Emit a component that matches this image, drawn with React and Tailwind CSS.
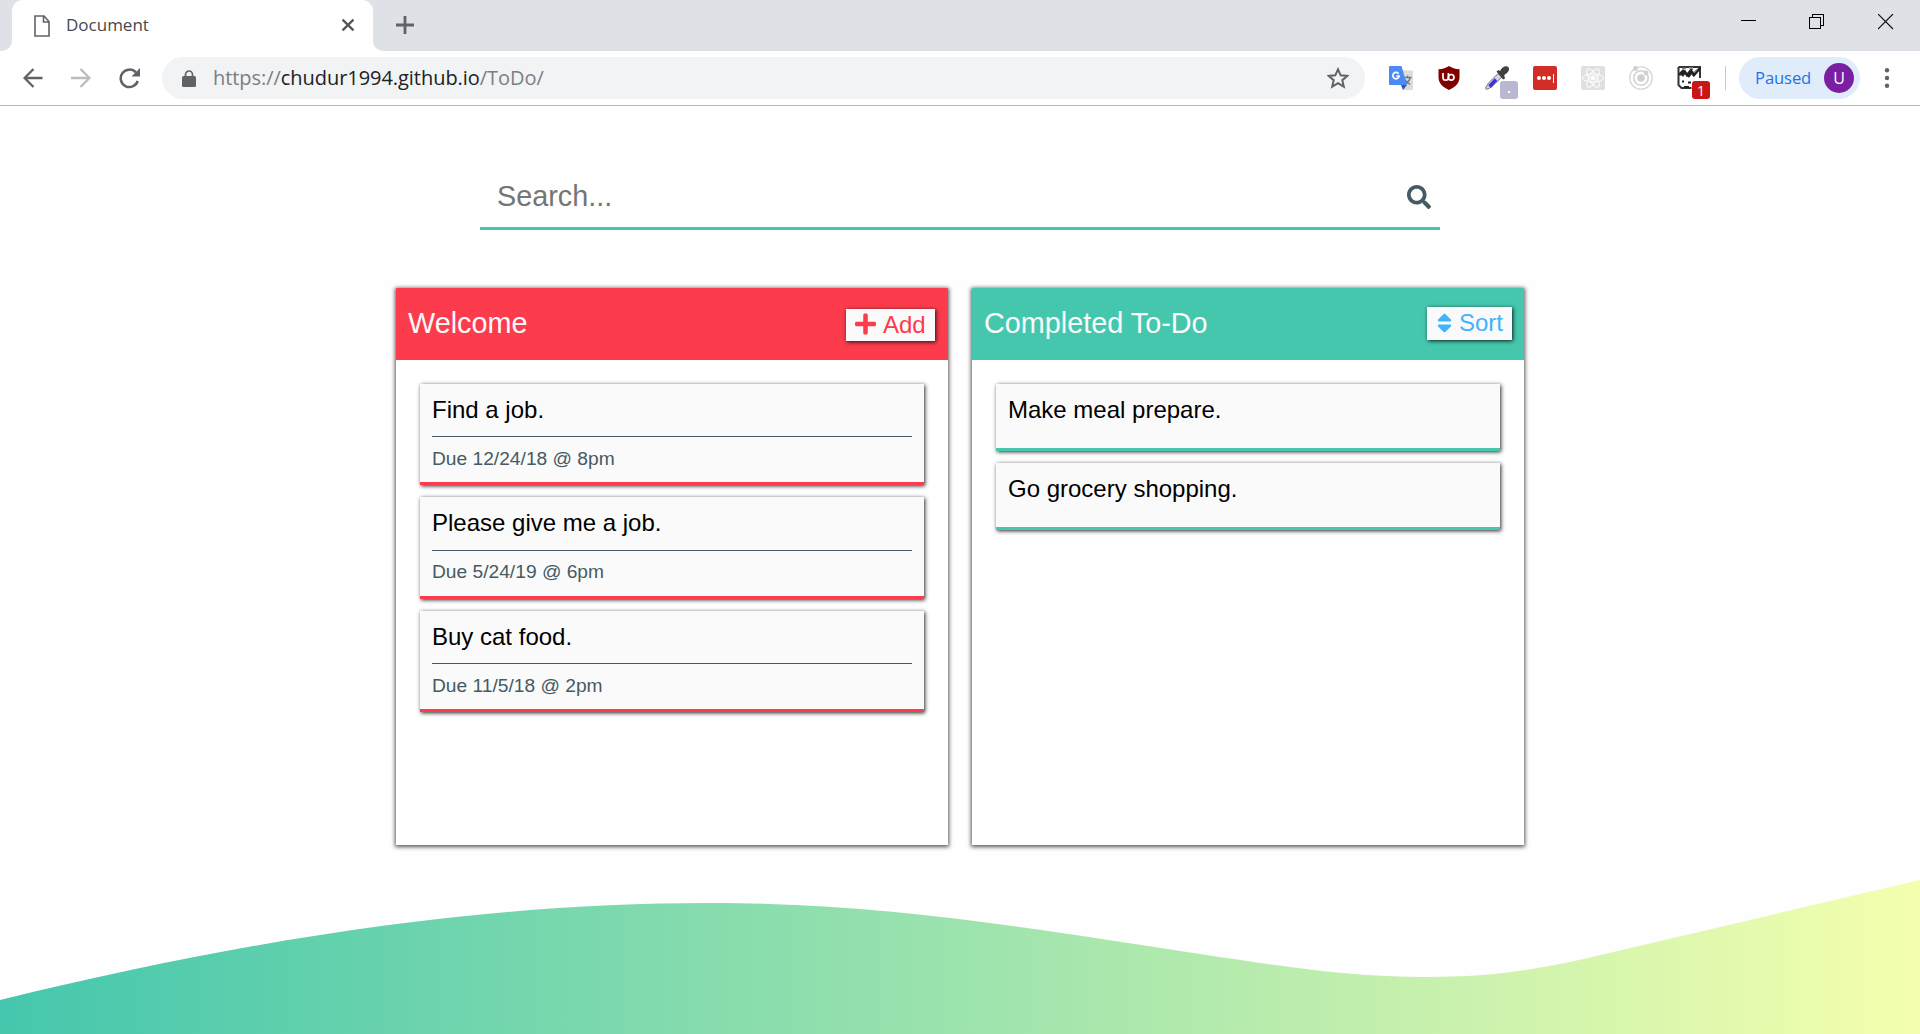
import { FaPlus, FaSearch, FaSort } from "react-icons/fa";

const SHADOW = "shadow-[0_1px_4px_1px_rgba(0,0,0,0.65)]";
const CARD_SHADOW = "shadow-[1px_1px_4px_0_rgba(0,0,0,0.85)]";

function Toolbar() {
  return (
    <header className="font-['Open_Sans',sans-serif]">
      <div className="flex h-[51px] bg-[#dee1e6]">
        <div className="h-full w-3 bg-white">
          <div className="h-full rounded-br-[10px] bg-[#dee1e6]" />
        </div>
        <div className="flex w-[361px] items-center rounded-t-[11px] bg-white pl-[22px] pr-[19px]">
          <svg className="h-[22px] w-4" viewBox="0 0 16 22" fill="none" stroke="#5f6368" strokeWidth="1.6">
            <path d="M1 1h9l5 5.500v14.500H1zM9.500 1v6H15" />
          </svg>
          <span className="ml-[16px] mt-[-1px] flex-1 text-[17px] text-[#45494d]">Document</span>
          <svg className="mt-[-2px] h-3 w-3" viewBox="0 0 12 12" stroke="#53575b" strokeWidth="2.300">
            <path d="M.5.5l11 11M11.500.5l-11 11" />
          </svg>
        </div>
        <div className="flex h-full flex-1 items-start justify-between bg-white">
          <div className="flex h-full w-full items-start justify-between rounded-bl-[10px] bg-[#dee1e6]">
            <svg className="ml-[23px] mt-4 h-[18px] w-[18px]" viewBox="0 0 18 18" stroke="#5f6368" strokeWidth="2.800">
              <path d="M9 0v18M0 9h18" />
            </svg>
            <div className="mr-[26px] mt-[14px] flex items-start gap-[53px]">
              <svg className="h-4 w-4" viewBox="0 0 16 16" stroke="#000" shapeRendering="crispEdges">
                <path d="M1 6.500h15" />
              </svg>
              <svg className="h-4 w-4" viewBox="0 0 16 16" fill="none" stroke="#000" shapeRendering="crispEdges">
                <path d="M.5 3.500h11v11H.5zM3.500 3V.5h11v11H12" />
              </svg>
              <svg className="h-4 w-4" viewBox="0 0 16 16" stroke="#111" strokeWidth="1.200">
                <path d="M0 0l15 15M15 0l-15 15" />
              </svg>
            </div>
          </div>
        </div>
      </div>
      <div className="flex h-[55px] items-center border-b border-[#b6b6b6] bg-white">
        <svg className="ml-[23px] h-5 w-5" viewBox="0 0 20 20" fill="none" stroke="#5f6368" strokeWidth="2.300">
          <path d="M19.500 10H2M10.500 1L1.600 10l8.900 9" />
        </svg>
        <svg className="ml-7 h-5 w-5" viewBox="0 0 20 20" fill="none" stroke="#babcbe" strokeWidth="2.300">
          <path d="M0 10h18M9.500 1l8.900 9-8.900 9" />
        </svg>
        <svg className="ml-7 h-[21px] w-[21px]" viewBox="0 0 21 21" fill="none" stroke="#5f6368" strokeWidth="2.500">
          <path d="M18.700 13A8.700 8.700 0 1 1 16.800 4.400" />
          <path d="M21 0v8.500h-8.500z" fill="#5f6368" stroke="none" />
        </svg>
        <div className="ml-[22px] flex h-[42px] w-[1203px] items-center rounded-full bg-[#f1f3f4] pl-[20px] pr-4">
          <svg className="h-[17px] w-[14px]" viewBox="0 0 14 17">
            <path d="M3.500 7V4.500a3.500 3.500 0 0 1 7 0V7" fill="none" stroke="#5f6368" strokeWidth="1.700" />
            <rect y="6" width="14" height="11" rx="1.500" fill="#5f6368" />
          </svg>
          <span className="ml-[17px] flex-1 whitespace-nowrap text-[20px] tracking-[-0.050px] text-[#7a7f84]">
            https://<span className="text-[#202124]">chudur1994.github.io</span>/ToDo/
          </span>
          <svg className="h-[22px] w-[22px]" viewBox="0 0 22 22" fill="none" stroke="#5f6368" strokeWidth="2">
            <path d="M11 2.300l2.700 6 6.500.6-4.900 4.300 1.500 6.400L11 16.200l-5.800 3.400 1.500-6.400L1.800 8.900l6.500-.6z" />
          </svg>
        </div>
        <Extensions />
        <div className="ml-[24px] h-6 w-px bg-[#c5c8cc]" />
        <div className="ml-[13px] flex h-[42px] w-[121px] items-center justify-between rounded-full bg-[#e1ecfb] pl-4 pr-1.5 text-[#1a73e8]">
          <span className="text-[16.600px] tracking-[-0.100px]">Paused</span>
          <span className="flex h-[30px] w-[30px] items-center justify-center rounded-full bg-[#7b1fa2] text-[16px] text-white">U</span>
        </div>
        <svg className="ml-[24px] h-5 w-[6px]" viewBox="0 0 6 20" fill="#5f6368">
          <circle cx="3" cy="2.300" r="2.200" />
          <circle cx="3" cy="10" r="2.200" />
          <circle cx="3" cy="17.700" r="2.200" />
        </svg>
      </div>
    </header>
  );
}

function Extensions() {
  return (
    <div className="ml-[24px] flex gap-6">
      <svg className="h-6 w-6" viewBox="0 0 24 24">
        <path d="M10 4.500h13a1 1 0 0 1 1 1V23a1 1 0 0 1-1 1h-9z" fill="#dcdcdc" />
        <path d="M14.500 11.500h8M18.500 9.500v2M21 12c-.7 3-3 5-5.500 6.500M16 13.500c1.200 2.200 3 3.800 5.200 5" fill="none" stroke="#607d8b" strokeWidth="1.400" />
        <path d="M12 19h6l-4 5z" fill="#3a50b8" />
        <path d="M1 0h11.500L18 19H1a1 1 0 0 1-1-1V1a1 1 0 0 1 1-1z" fill="#4a8af4" />
        <path d="M9.700 7.800A3.200 3.200 0 1 0 10.200 10H7.200" fill="none" stroke="#fff" strokeWidth="1.700" />
      </svg>
      <svg className="h-6 w-6" viewBox="0 0 24 24">
        <path d="M12 0c3 2 6 3 10.500 3.200V11c0 6-4 10-10.500 13C5.500 21 1.500 17 1.500 11V3.200C6 3 9 2 12 0z" fill="#800000" />
        <path d="M6 7v4.500a2.700 2.700 0 0 0 5.400 0V7" fill="none" stroke="#fff" strokeWidth="1.700" />
        <circle cx="14.200" cy="11.300" r="2.800" fill="none" stroke="#fff" strokeWidth="1.700" />
      </svg>
      <div className="relative h-6 w-6">
        <svg className="h-6 w-6" viewBox="0 0 24 24">
          <path d="M13 7.500l4 3.500L6.500 21l-5 2.500-1-1.500 3-5z" fill="#d3d5de" stroke="#777" />
          <path d="M4.500 20.500L11 13.500" stroke="#3a2fe0" strokeWidth="3.500" />
          <path d="M11.500 5.500l2-1.500L15 5C16.500 2 19 0 21.500.2c2.500.2 3.300 3 1.700 5.300-1 1.500-2.500 2.500-4 3.500l.8 3.500-2 1z" fill="#414141" />
        </svg>
        <span className="absolute left-[15px] top-[15px] flex h-[18px] w-[18px] items-center justify-center rounded-[3px] bg-[#b9b8d2]">
          <i className="mt-1 h-[2px] w-[2px] bg-white" />
        </span>
      </div>
      <div className="flex h-6 w-6 items-center justify-center gap-[1px] rounded-[2px] bg-[#d32d27]">
        <i className="h-1 w-1 rounded-full bg-white" />
        <i className="h-1 w-1 rounded-full bg-white" />
        <i className="h-1 w-1 rounded-full bg-white" />
        <i className="ml-px h-[9px] w-px bg-white" />
      </div>
      <svg className="h-6 w-6" viewBox="0 0 24 24" fill="none" stroke="#fff">
        <rect width="24" height="24" rx="2" fill="#e0e0e0" stroke="none" />
        <ellipse cx="12" cy="12" rx="10.500" ry="4" />
        <ellipse cx="12" cy="12" rx="10.500" ry="4" transform="rotate(60 12 12)" />
        <ellipse cx="12" cy="12" rx="10.500" ry="4" transform="rotate(120 12 12)" />
        <circle cx="12" cy="12" r="2" fill="#fff" />
      </svg>
      <svg className="h-6 w-6" viewBox="0 0 24 24" fill="none" stroke="#d6d6d6" strokeWidth="1.300">
        <circle cx="12" cy="12" r="11.200" />
        <circle cx="12" cy="12" r="7.200" strokeWidth="1.800" />
        <circle cx="12" cy="12" r="3.800" fill="#d0d0d0" stroke="none" />
        <circle cx="6.500" cy="2.500" r="2.400" fill="#d0d0d0" stroke="none" />
        <circle cx="17" cy="7" r="2.400" fill="#d0d0d0" stroke="none" />
      </svg>
      <div className="relative h-6 w-6">
        <svg className="h-6 w-6" viewBox="0 0 24 24">
          <path d="M1.500 1h21.500v11M1.500 1v18l3 3h10" fill="#fff" stroke="#333" strokeWidth="2" />
          <path d="M2 9l5-5M5 10l3-4 2 3 5-6M11 11l4-5 2 3 6-7M16 10l2-3" fill="none" stroke="#222" strokeWidth="2.600" />
          <path d="M5 2.500h4M12 2h4M20 3.500l-3 3" stroke="#888" strokeWidth="1.400" />
          <path d="M5 15.500h2M11 16.500h3M7 21h5" stroke="#222" strokeWidth="2" />
        </svg>
        <span className="absolute left-[15px] top-[15px] flex h-[18px] w-[18px] items-center justify-center rounded-[3px] bg-[#cb1414] text-[14px] text-white">1</span>
      </div>
    </div>
  );
}

function Panel({ title, headerClass, button, children }) {
  return (
    <section className={`h-[557px] w-[552px] bg-white ${SHADOW}`}>
      <div className={`flex h-[72px] justify-between pl-3 ${headerClass}`}>
        <h2 className="mt-[19px] text-[28.800px] leading-[33px] text-[#fafafa]">{title}</h2>
        {button}
      </div>
      <div className="flex flex-col gap-3 p-6">{children}</div>
    </section>
  );
}

function Task({ title, due }) {
  return (
    <article className={`h-[101.400px] border-b-[3px] border-[#fc3c4c] bg-[#fafafa] px-3 pt-3 ${CARD_SHADOW}`}>
      <h3 className="h-[41.200px] border-b border-[#455a64] text-2xl leading-[27px] text-black">{title}</h3>
      <p className="mt-[10.800px] text-[19.200px] leading-[22px] text-[#455a64]">{due}</p>
    </article>
  );
}

function DoneTask({ title }) {
  return (
    <article className={`h-[67px] border-b-[3px] border-[#45c7ad] bg-[#fafafa] px-3 pt-3 ${CARD_SHADOW}`}>
      <h3 className="text-2xl leading-[27px] text-black">{title}</h3>
    </article>
  );
}

function Wave() {
  return (
    <svg className="mt-auto block h-[154px] w-full" viewBox="0 880 1920 154" preserveAspectRatio="none">
      <defs>
        <linearGradient id="wave" x1="0" x2="1" y1="0" y2="0">
          <stop offset="0" stopColor="#45c7ad" />
          <stop offset="1" stopColor="#f4ffad" />
        </linearGradient>
      </defs>
      <path
        d="M0 1000C250 939 480 903 710 903C885 903 1020 927 1200 954C1290 967.500 1350 977 1425 977C1495 977 1540 969 1590 957.500L1920 880V1034H0Z"
        fill="url(#wave)"
      />
    </svg>
  );
}

export default function App() {
  return (
    <div className="flex h-[1034px] w-[1920px] flex-col overflow-hidden bg-[#fefefe]">
      <Toolbar />
      <main className="flex flex-1 flex-col font-['Liberation_Sans',Arial,sans-serif]">
        <div className="mx-auto mt-[62px] flex h-[62px] w-[960px] items-center justify-between border-b-[3px] border-[#45c7ad] pb-[2px] pl-[17px] pr-[9px]">
          <span className="text-[28.800px] text-[#757575]">Search...</span>
          <FaSearch className="h-6 w-6 text-[#455a64]" />
        </div>
        <div className="mt-[58px] flex justify-center gap-6">
          <Panel
            title="Welcome"
            headerClass="bg-[#fc3c4c] pr-[13px]"
            button={
              <button className={`mt-[21px] flex h-8 w-[89px] items-center bg-[#fafafa] pl-[8px] text-2xl leading-[31px] text-[#fc3c4c] ${CARD_SHADOW}`}>
                <FaPlus className="mb-[2px] mr-[6px] h-6 w-[23px]" />
                <span className="mb-[2px]">Add</span>
              </button>
            }
          >
            <Task title="Find a job." due="Due 12/24/18 @ 8pm" />
            <Task title="Please give me a job." due="Due 5/24/19 @ 6pm" />
            <Task title="Buy cat food." due="Due 11/5/18 @ 2pm" />
          </Panel>
          <Panel
            title="Completed To-Do"
            headerClass="bg-[#45c7ad] pr-3"
            button={
              <button className={`mt-[19px] flex h-[33px] w-[85px] items-center bg-[#fafafa] pl-[10px] text-2xl leading-8 text-[#40b3ff] ${CARD_SHADOW}`}>
                <FaSort className="mb-px mr-[7px] h-6 w-[15px]" />
                <span className="mb-px">Sort</span>
              </button>
            }
          >
            <DoneTask title="Make meal prepare." />
            <DoneTask title="Go grocery shopping." />
          </Panel>
        </div>
        <Wave />
      </main>
    </div>
  );
}
